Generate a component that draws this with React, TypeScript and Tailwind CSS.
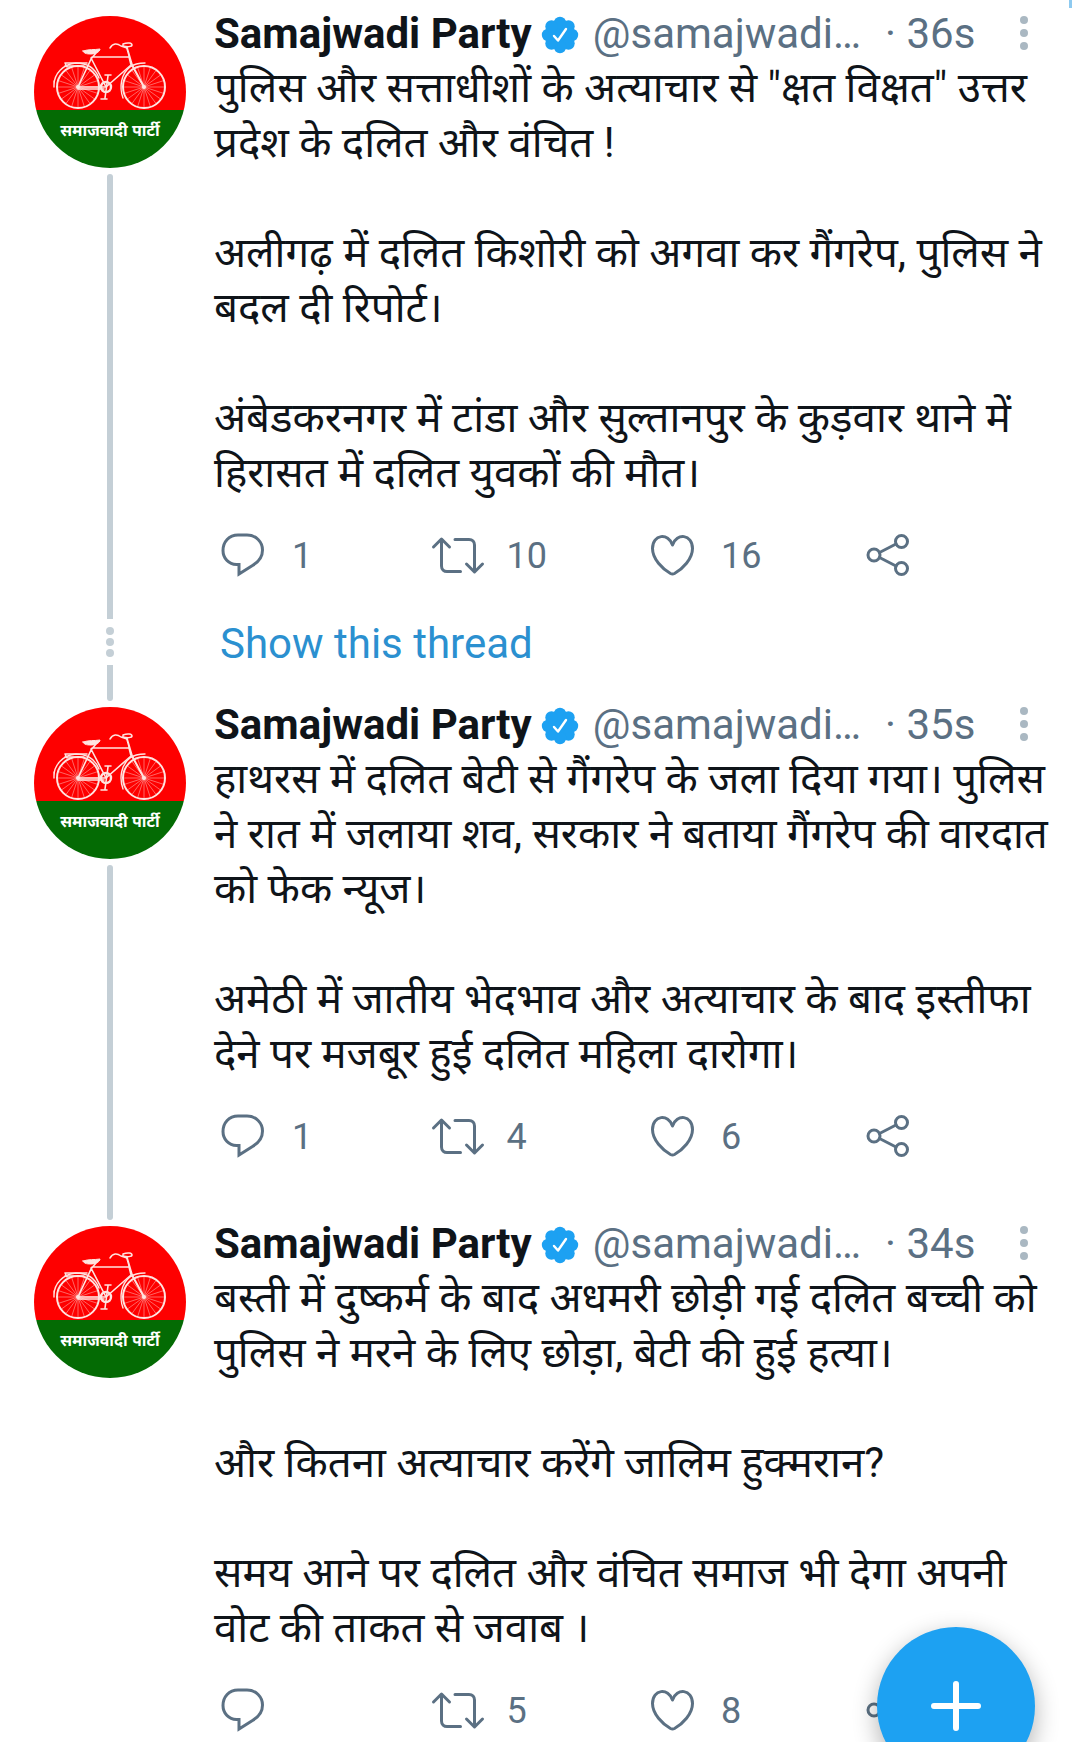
import React from "react";

type Tweet = {
    time: string;
    text: string;
    replies?: number;
    retweets: number;
    likes: number;
    inThread?: boolean;
};

const tweets: Tweet[] = [
    {
        time: "36s",
        text: `पुलिस और सत्ताधीशों के अत्याचार से "क्षत विक्षत" उत्तर
प्रदेश के दलित और वंचित !

अलीगढ़ में दलित किशोरी को अगवा कर गैंगरेप, पुलिस ने
बदल दी रिपोर्ट।

अंबेडकरनगर में टांडा और सुल्तानपुर के कुड़वार थाने में
हिरासत में दलित युवकों की मौत।`,
        replies: 1,
        retweets: 10,
        likes: 16,
        inThread: true,
    },
    {
        time: "35s",
        text: `हाथरस में दलित बेटी से गैंगरेप के जला दिया गया। पुलिस
ने रात में जलाया शव, सरकार ने बताया गैंगरेप की वारदात
को फेक न्यूज।

अमेठी में जातीय भेदभाव और अत्याचार के बाद इस्तीफा
देने पर मजबूर हुई दलित महिला दारोगा।`,
        replies: 1,
        retweets: 4,
        likes: 6,
    },
    {
        time: "34s",
        text: `बस्ती में दुष्कर्म के बाद अधमरी छोड़ी गई दलित बच्ची को
पुलिस ने मरने के लिए छोड़ा, बेटी की हुई हत्या।

और कितना अत्याचार करेंगे जालिम हुक्मरान?

समय आने पर दलित और वंचित समाज भी देगा अपनी
वोट की ताकत से जवाब ।`,
        retweets: 5,
        likes: 8,
    },
];

const spokes = Array.from({ length: 20 }, (_, i) => (i * Math.PI) / 10);

const Wheel = ({ cx }: { cx: number }) => (
    <g>
        <circle cx={cx} cy="71" r="21" strokeWidth="2" />
        {spokes.map((a) => (
            <line
                key={a}
                x1={cx}
                y1="71"
                x2={cx + 20 * Math.cos(a)}
                y2={71 + 20 * Math.sin(a)}
                strokeWidth="0.6"
                opacity="0.75"
            />
        ))}
        <circle cx={cx} cy="71" r="2" fill="#ffe4e0" stroke="none" />
    </g>
);

const Avatar = () => (
    <svg viewBox="0 0 152 152" className="size-[152px] shrink-0 rounded-full" role="img" aria-label="Samajwadi Party">
        <rect width="152" height="94" fill="#fe0000" />
        <rect y="94" width="152" height="58" fill="#046b04" />
        <g fill="none" stroke="#ffe4e0" strokeWidth="1.6" strokeLinecap="round" strokeLinejoin="round">
            <Wheel cx={44} />
            <Wheel cx={110} />
            {/* mudguards and carrier */}
            <path d="M20 69C20 58 29 48 42 47C53 47 61 52 65 62M20 65v6" strokeWidth="1.4" />
            <path d="M89 82C85 71 87 58 96 51C100 48 105 47 111 47" strokeWidth="1.4" />
            <path d="M31 47H53M31 50H50M31 47l2 4" />
            {/* frame */}
            <path d="M58 41H95M57 42L72 71M58 41L44 71H72L97 49M62 37L57 43" />
            <path d="M93 32L98 49L110 71M95 40l2 8" strokeWidth="2" />
            <path d="M49 35C55 33 60 34 66 33C66 36 61 38 57 38C54 38 50 38 49 35Z" fill="#ffe4e0" strokeWidth="1" />
            {/* handlebar */}
            <path d="M76 32C79 27 83 27 87 30L93 32M89 28C94 26 98 27 98 29C98 31 93 31 89 30Z" strokeWidth="1.5" />
            {/* crank and pedals */}
            <circle cx="72" cy="71" r="5" strokeWidth="2.4" />
            <path d="M74 60L71 82M71 59h6M67 83h6M44 73H70" />
        </g>
        <text x="76" y="120" textAnchor="middle" fill="#ffffff" className="font-['Noto_Sans',sans-serif] text-base font-bold">
            समाजवादी पार्टी
        </text>
    </svg>
);

const Verified = () => (
    <svg viewBox="0 0 38 38" className="ml-[9px] size-[38px] shrink-0" role="img" aria-label="Verified account">
        <g fill="#1da1f2">
            <circle cx="19" cy="19" r="14" />
            <circle cx="19" cy="7" r="6.2" />
            <circle cx="27.5" cy="10.5" r="6.2" />
            <circle cx="31" cy="19" r="6.2" />
            <circle cx="27.5" cy="27.5" r="6.2" />
            <circle cx="19" cy="31" r="6.2" />
            <circle cx="10.5" cy="27.5" r="6.2" />
            <circle cx="7" cy="19" r="6.2" />
            <circle cx="10.5" cy="10.5" r="6.2" />
        </g>
        <path d="M13 20L17 24.5L25 13" fill="none" stroke="#fff" strokeWidth="2.4" strokeLinecap="round" strokeLinejoin="round" />
    </svg>
);

const Icon = ({ children }: { children: React.ReactNode }) => (
    <svg
        viewBox="0 0 54 54"
        className="size-[54px] shrink-0"
        fill="none"
        stroke="currentColor"
        strokeWidth="3"
        strokeLinecap="round"
        strokeLinejoin="round"
        aria-hidden="true"
    >
        {children}
    </svg>
);

const ReplyIcon = () => (
    <Icon>
        <path d="M22 6H31C40 6 46.500 13 46.500 21C46.500 28 42.500 33 36.500 36.500L23 45V35.500H20.500C12.500 35.500 7 29 7 21.500C7 13 13 6 22 6Z" strokeLinejoin="miter" />
    </Icon>
);

const RetweetIcon = () => (
    <Icon>
        <path d="M2.500 18L10.500 10L18.500 18M10.500 10.500V37C10.500 40.500 13 42.500 16 42.500H29.500" />
        <path d="M24 10.500H38C41.500 10.500 43.500 13 43.500 16V42M35.500 35L43.500 43L51.500 35" />
    </Icon>
);

const HeartIcon = () => (
    <Icon>
        <path d="M27.500 16C23.500 3.500 7.500 5 7.500 19.500C7.500 30 17.500 40 25.500 44.500Q27.500 45.500 29.500 44.500C37.500 40 47.500 30 47.500 19.500C47.500 5 31.500 3.500 27.500 16Z" />
    </Icon>
);

const ShareIcon = () => (
    <Icon>
        <circle cx="14" cy="26" r="6" />
        <circle cx="41.500" cy="12.500" r="6" />
        <circle cx="41.500" cy="39.500" r="6" />
        <path d="M19.500 23.500L36 15M19.500 28.500L36 37" />
    </Icon>
);

type ActionProps = {
    label: string;
    count?: number;
    children: React.ReactNode;
};

const Action = ({ label, count, children }: ActionProps) => (
    <button type="button" aria-label={label} className="flex items-center gap-[22px] pl-0.5">
        {children}
        {count !== undefined && <span>{count}</span>}
    </button>
);

const TweetItem = ({ tweet, last }: { tweet: Tweet; last: boolean }) => (
    <article className="flex">
        <div className="flex w-[152px] shrink-0 flex-col items-center">
            <Avatar />
            {!last && (
                <div className={`mt-1.5 w-1.5 flex-1 bg-[#c4cfd6] ${tweet.inThread ? "rounded-t-full" : "mb-1.5 rounded-full"}`} />
            )}
        </div>
        <div className={`ml-7 min-w-0 flex-1 ${tweet.inThread ? "pb-9" : "pb-[62px]"}`}>
            <header className="flex h-11 items-start pr-9 text-[42px] leading-9 text-[#5b7083]">
                <h2 className="whitespace-nowrap font-bold text-[#0f1419]">Samajwadi Party</h2>
                <Verified />
                <span className="ml-3.5 whitespace-nowrap">@samajwadi…</span>
                <span className="ml-6 whitespace-nowrap">· {tweet.time}</span>
                <button type="button" aria-label="More options" className="ml-auto flex w-6 flex-col items-center gap-[5px]">
                    <span className="size-2 rounded-full bg-[#aab8c2]" />
                    <span className="size-2 rounded-full bg-[#aab8c2]" />
                    <span className="size-2 rounded-full bg-[#aab8c2]" />
                </button>
            </header>
            <p className="whitespace-pre font-[Roboto,'Noto_Sans',sans-serif] text-[42px] leading-[55px] text-[#0f1419]">
                {tweet.text}
            </p>
            <div className="mt-[29px] grid grid-cols-4 text-4xl text-[#5b7083]">
                <Action label="Reply" count={tweet.replies}><ReplyIcon /></Action>
                <Action label="Retweet" count={tweet.retweets}><RetweetIcon /></Action>
                <Action label="Like" count={tweet.likes}><HeartIcon /></Action>
                <Action label="Share"><ShareIcon /></Action>
            </div>
        </div>
    </article>
);

const ShowThread = () => (
    <div className="flex h-[88px]">
        <div className="flex w-[152px] flex-col items-center pb-1.5">
            <div className="flex h-[46px] flex-col items-center justify-center gap-[3px]">
                <span className="size-2 rounded-full bg-[#c4cfd6]" />
                <span className="size-2 rounded-full bg-[#c4cfd6]" />
                <span className="size-2 rounded-full bg-[#c4cfd6]" />
            </div>
            <div className="w-1.5 flex-1 rounded-b-full bg-[#c4cfd6]" />
        </div>
        <a href="#thread" className="ml-[34px] text-[42px] leading-[50px] text-[#2b90d0]">Show this thread</a>
    </div>
);

const App = () => {
    return (
        <main className="relative h-screen overflow-hidden bg-white pl-[34px] pt-4 font-[Roboto,sans-serif]">
            <div className="absolute right-0 top-0 h-2 w-[3px] bg-[#8ecaf0]" />
            {tweets.map((tweet, i) => (
                <React.Fragment key={tweet.time}>
                    <TweetItem tweet={tweet} last={i === tweets.length - 1} />
                    {tweet.inThread && <ShowThread />}
                </React.Fragment>
            ))}
            <button
                type="button"
                aria-label="New tweet"
                className="fixed -bottom-[43px] right-[37px] flex size-[158px] items-center justify-center rounded-full bg-[#1da1f2] shadow-[0_8px_24px_rgba(0,0,0,0.3)]"
            >
                <svg viewBox="0 0 50 50" className="size-[50px]" stroke="#fff" strokeWidth="6" strokeLinecap="round" aria-hidden="true">
                    <path d="M25 3V47M3 25H47" />
                </svg>
            </button>
        </main>
    );
};

export default App;
